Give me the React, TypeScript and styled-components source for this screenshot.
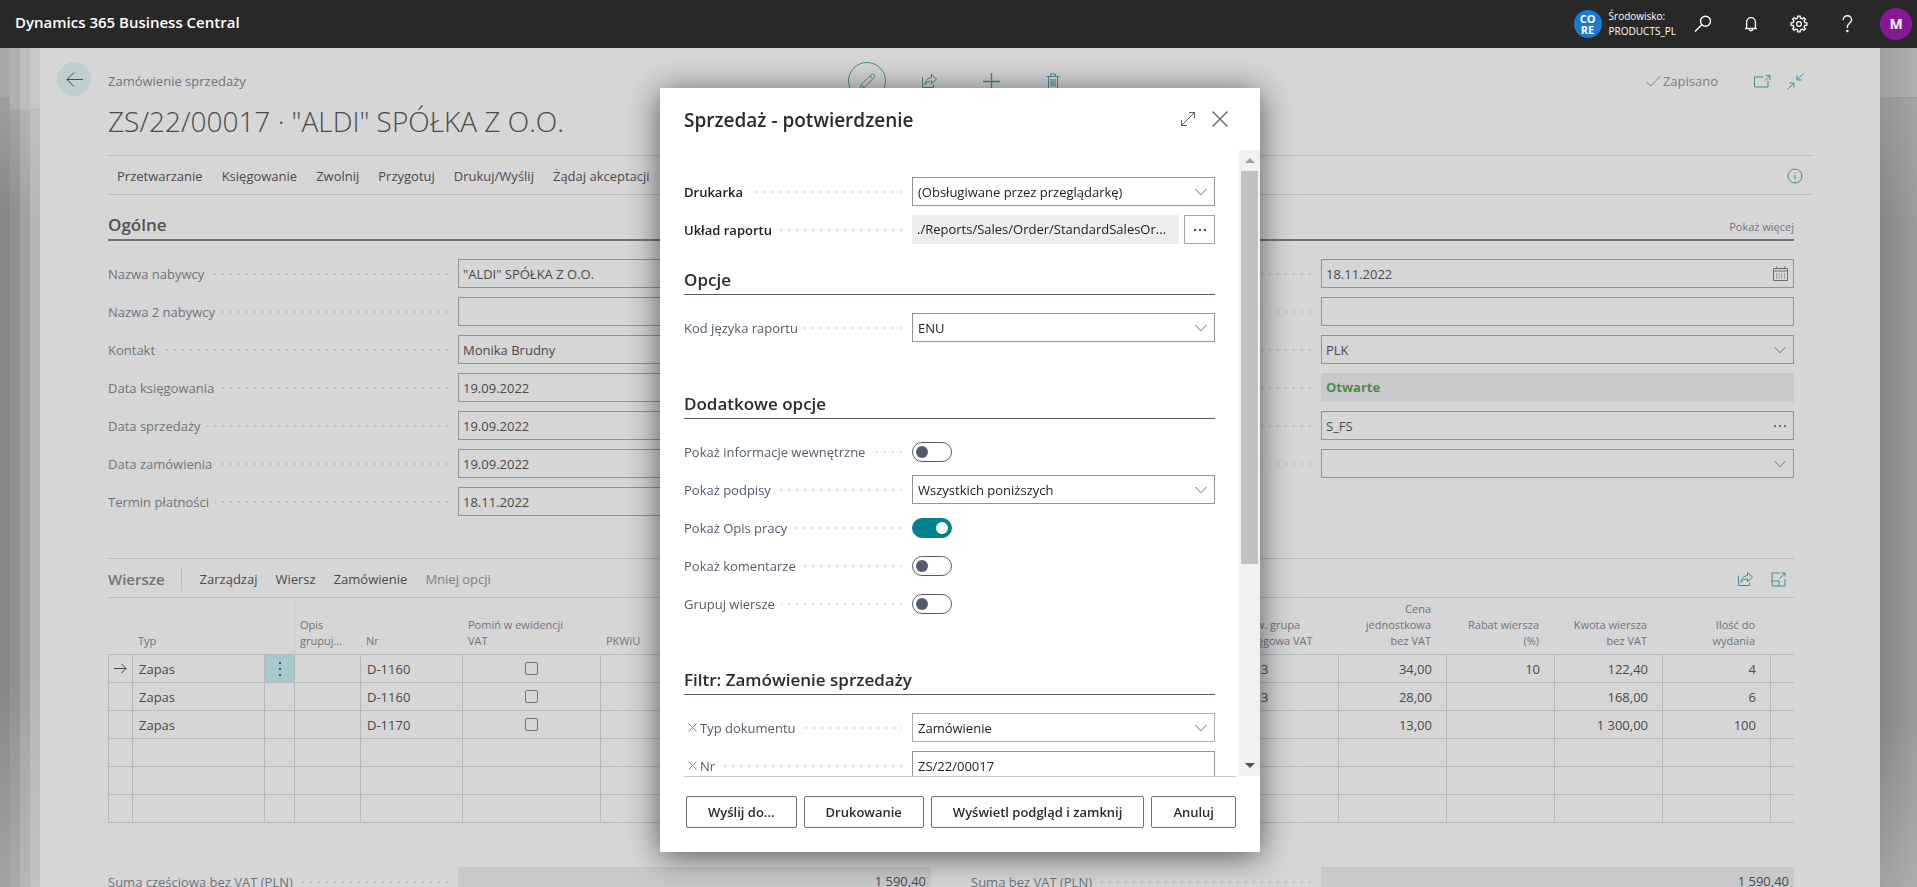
import React, { useId, useState } from 'react';
import styled, { createGlobalStyle, css } from 'styled-components';

const GlobalStyle = createGlobalStyle`
  *, *::before, *::after { box-sizing: border-box; }
  body {
    margin: 0;
    background: #d6d6d6;
    font-family: 'Open Sans', 'Noto Sans', sans-serif;
    font-size: 13px;
    line-height: 20px;
    color: #4a4a4a;
  }
  button, input, select { font: inherit; color: inherit; margin: 0; }
  button { background: none; border: 0; padding: 0; cursor: pointer; }
  h1, h2, h3, p { margin: 0; }
`;

/* ---------- shell ---------- */

const Shell = styled.div`
  display: flex;
  flex-direction: column;
  height: 100vh;
  overflow: hidden;
`;

const TopBar = styled.header`
  flex: none;
  display: flex;
  align-items: center;
  justify-content: space-between;
  height: 48px;
  padding: 0 5px 0 15px;
  background: #282828;
  color: #fff;
`;

const Product = styled.a`
  padding-bottom: 4px;
  font-size: 15px;
  font-weight: 600;
  color: #fff;
  text-decoration: none;
`;

const TopTools = styled.div`
  display: flex;
  align-items: center;
`;

const Environment = styled.div`
  display: flex;
  align-items: center;
  gap: 7px;
  margin-right: 3px;
  font-size: 10px;
  line-height: 15px;
`;

const EnvironmentBadge = styled.div`
  display: flex;
  flex-direction: column;
  align-items: center;
  justify-content: center;
  width: 28px;
  height: 28px;
  border-radius: 50%;
  background: #1a7ad0;
  font-size: 11px;
  font-weight: 700;
  line-height: 11px;
`;

const TopButton = styled.button`
  display: flex;
  align-items: center;
  justify-content: center;
  width: 48px;
  height: 48px;
`;

const Avatar = styled.button`
  width: 32px;
  height: 32px;
  margin-left: 9px;
  border-radius: 50%;
  background: #881798;
  color: #fff;
  font-size: 14px;
  font-weight: 700;
`;

const Stage = styled.div`
  flex: 1;
  display: flex;
  min-height: 0;
  overflow: hidden;
`;

const PageEdge = styled.div<{ $top: string; $body: string; $end: string; $head: number }>`
  flex: none;
  display: flex;
  flex-direction: column;
  width: 10px;
  background: linear-gradient(${p => p.$top}, ${p => p.$body} 20%, ${p => p.$body} 75%, ${p => p.$end});
  &::before {
    content: '';
    height: ${p => p.$head}px;
    background: ${p => p.$top};
    border-bottom: 1px solid rgba(0, 0, 0, 0.05);
  }
`;

const RightEdge = styled.div`
  flex: none;
  width: 37px;
  background:
    linear-gradient(rgba(176, 180, 178, 0.5), transparent 22%, transparent 80%, rgba(190, 190, 190, 0.5)),
    linear-gradient(90deg, #848484, #9b9b9b);
  &::before {
    content: '';
    display: block;
    height: 50px;
    background: linear-gradient(90deg, #9e9e9e, #b0b0b0);
    border-bottom: 1px solid #979797;
  }
`;

const Page = styled.main`
  flex: 1;
  min-width: 0;
  background: #d6d6d6;
`;

/* ---------- page header ---------- */

const Head = styled.div`
  display: grid;
  grid-template-columns: 1fr auto 1fr;
  padding-top: 14px;
`;

const HeadStart = styled.div`
  display: flex;
  align-items: flex-start;
  gap: 17px;
  padding-left: 17px;
`;

const BackButton = styled.button`
  display: flex;
  align-items: center;
  justify-content: center;
  width: 34px;
  height: 34px;
  border-radius: 50%;
  background: #bfcfcf;
`;

const Caption = styled.div`
  line-height: 38px;
  color: #6f747b;
`;

const HeadActions = styled.div`
  display: flex;
  gap: 24px;
  color: #3f8f92;
`;

const RoundButton = styled.button<{ $ring?: boolean }>`
  display: flex;
  align-items: center;
  justify-content: center;
  width: 38px;
  height: 38px;
  border: 1px solid ${p => (p.$ring ? '#3f8f92' : 'transparent')};
  border-radius: 50%;
`;

const HeadEnd = styled.div`
  display: flex;
  align-items: center;
  justify-content: flex-end;
  padding-right: 76px;
  color: #3f8f92;
`;

const Saved = styled.span`
  display: flex;
  align-items: center;
  gap: 2px;
  margin-right: 36px;
  color: #7b8086;
`;

const IconButton = styled.button<{ $gap?: number }>`
  display: flex;
  align-items: center;
  justify-content: center;
  margin-left: ${p => p.$gap ?? 0}px;
`;

const PageTitle = styled.h1`
  margin: 1px 68px 14px;
  font-size: 28px;
  font-weight: 300;
  line-height: 40px;
  color: #4a4a4a;
`;

const ActionBar = styled.nav`
  display: flex;
  align-items: center;
  gap: 19px;
  height: 40px;
  margin: 0 68px;
  padding: 2px 9px 0;
  border-top: 1px solid #b9bbbc;
  border-bottom: 1px solid #b9bbbc;
`;

const InfoButton = styled(IconButton)`
  margin-left: auto;
  color: #3f8f92;
`;

const Content = styled.div`
  padding: 0 86px 0 68px;
`;

const SectionHead = styled.div`
  display: flex;
  align-items: flex-end;
  justify-content: space-between;
  height: 46px;
  padding-bottom: 2px;
  border-bottom: 2px solid #6d7480;
`;

const SectionTitle = styled.h2`
  font-size: 17px;
  font-weight: 600;
  line-height: 24px;
  color: #4f5256;
`;

const MoreLink = styled.a`
  font-size: 11px;
  color: #6f747b;
  text-decoration: none;
`;

const TwoColumns = styled.div<{ $top: number }>`
  display: grid;
  grid-template-columns: 1fr 1fr;
  gap: 40px;
  margin-top: ${p => p.$top}px;
`;

const FieldStack = styled.div`
  display: flex;
  flex-direction: column;
  gap: 9px;
`;

/* ---------- fields ---------- */

const Row = styled.div<{ $label: number }>`
  display: grid;
  grid-template-columns: ${p => p.$label}px 1fr;
  height: 29px;
`;

const LabelCell = styled.div<{ $dot: string }>`
  display: flex;
  align-items: center;
  padding-right: 10px;
  &::after {
    content: '';
    flex: 1;
    height: 2px;
    margin-left: 6px;
    background: linear-gradient(90deg, transparent 6px, ${p => p.$dot} 6px) right top / 8px 2px repeat-x;
  }
`;

const Label = styled.label<{ $strong?: boolean; $dialog?: boolean }>`
  color: ${p => (p.$strong ? '#212121' : p.$dialog ? '#505c6d' : '#6f747b')};
  font-weight: ${p => (p.$strong ? 600 : 400)};
`;

const ClearButton = styled.button`
  display: flex;
  align-items: center;
  justify-content: center;
  width: 16px;
  height: 16px;
  color: #8a8f96;
`;

const Control = styled.div<{ $edge?: string }>`
  position: relative;
  display: flex;
  align-items: center;
  flex: 1;
  min-width: 0;
  border: 1px solid ${p => p.$edge ?? '#8f949b'};
`;

const fieldText = css`
  flex: 1;
  min-width: 0;
  width: 100%;
  height: 100%;
  border: 0;
  border-radius: 0;
  outline: 0;
  background: transparent;
  text-overflow: ellipsis;
`;

const TextInput = styled.input<{ $dialog?: boolean }>`
  ${fieldText}
  padding: 0 5px 0 ${p => (p.$dialog ? 5 : 4)}px;
  color: ${p => (p.$dialog ? '#212121' : '#4a4a4a')};
`;

const SelectInput = styled.select`
  ${fieldText}
  appearance: none;
  padding: 0 32px 0 5px;
  color: #212121;
`;

const Assist = styled.button`
  position: absolute;
  top: 0;
  bottom: 0;
  right: 0;
  display: flex;
  align-items: center;
  justify-content: center;
  width: 26px;
  color: #6b6f75;
`;

const SelectMark = styled.span`
  position: absolute;
  top: 0;
  bottom: 0;
  right: 0;
  display: flex;
  align-items: center;
  justify-content: center;
  width: 26px;
  color: #6b6f75;
  pointer-events: none;
`;

const ReadOnly = styled.output<{ $tone?: 'good' | 'number' | 'dialog' }>`
  flex: 1;
  min-width: 0;
  padding: 0 5px;
  overflow: hidden;
  line-height: 29px;
  white-space: nowrap;
  text-overflow: ellipsis;
  background: ${p => (p.$tone === 'dialog' ? '#ebedef' : '#c8c9cb')};
  color: ${p => (p.$tone === 'good' ? '#4f8a4f' : p.$tone === 'dialog' ? '#212121' : '#4a4a4a')};
  font-weight: ${p => (p.$tone === 'good' ? 700 : 400)};
  text-align: ${p => (p.$tone === 'number' ? 'right' : 'left')};
`;

/* ---------- lines ---------- */

const LinesBar = styled.div`
  display: flex;
  align-items: center;
  gap: 18px;
  height: 40px;
  margin-top: 42px;
  padding-top: 2px;
  border-top: 1px solid #b9bbbc;
  border-bottom: 1px solid #b9bbbc;
`;

const LinesTitle = styled.h2`
  padding-right: 16px;
  border-right: 1px solid #b9bbbc;
  font-size: 15px;
  font-weight: 600;
  line-height: 23px;
  color: #6f747b;
`;

const LinesTools = styled.div`
  display: flex;
  gap: 17px;
  margin-left: auto;
  padding-right: 8px;
  color: #3f8f92;
`;

const BarButton = styled.button<{ $soft?: boolean }>`
  color: ${p => (p.$soft ? '#7b8086' : '#4a4a4a')};
`;

const Lines = styled.table`
  width: 100%;
  table-layout: fixed;
  border-collapse: separate;
  border-spacing: 0;
`;

const Col = styled.col<{ $w?: number }>`
  width: ${p => (p.$w ? `${p.$w}px` : 'auto')};
`;

const Th = styled.th<{ $right?: boolean; $frozen?: boolean }>`
  height: 57px;
  padding: ${p => (p.$right ? '0 16px 5px 16px' : '0 4px 5px 5px')};
  border-bottom: 1px solid #b7babd;
  border-right: ${p => (p.$frozen ? '1px solid #cbcccd' : '0')};
  font-size: 11px;
  font-weight: 400;
  line-height: 16px;
  vertical-align: bottom;
  text-align: ${p => (p.$right ? 'right' : 'left')};
  color: #6f747b;
`;

const Td = styled.td<{ $align?: 'right' | 'center'; $first?: boolean; $last?: boolean; $active?: boolean }>`
  height: 28px;
  padding: ${p => (p.$align === 'center' ? '0' : p.$align === 'right' ? '0 14px 0 6px' : '0 6px')};
  border-bottom: 1px solid #b7babd;
  border-right: ${p => (p.$last ? '0' : '1px solid #b7babd')};
  border-left: ${p => (p.$first ? '1px solid #b7babd' : '0')};
  background: ${p => (p.$active ? '#a5c8ca' : 'transparent')};
  text-align: ${p => p.$align ?? 'left'};
  white-space: nowrap;
`;

const RowMenu = styled.button`
  display: flex;
  align-items: center;
  justify-content: center;
  width: 100%;
  height: 27px;
`;

const Tick = styled.input`
  appearance: none;
  display: block;
  width: 13px;
  height: 13px;
  margin: 0 auto;
  border: 1px solid #6f7277;
  border-radius: 2px;
`;

/* ---------- dialog ---------- */

const Overlay = styled.div`
  position: fixed;
  inset: 0;
  display: flex;
  justify-content: center;
  padding: 88px 0 35px 3px;
`;

const Dialog = styled.div`
  display: flex;
  flex-direction: column;
  width: 600px;
  background: #fff;
  box-shadow: 0 4px 32px rgba(0, 0, 0, 0.6);
  border-radius: 1px;
`;

const DialogHead = styled.div`
  flex: none;
  display: flex;
  align-items: center;
  gap: 16px;
  height: 62px;
  padding: 0 32px 0 24px;
  color: #5a5d61;
`;

const DialogTitle = styled.h2`
  flex: 1;
  padding-top: 2px;
  font-size: 19px;
  font-weight: 600;
  line-height: 28px;
  color: #2b2b2b;
`;

const DialogBody = styled.div`
  flex: 1;
  display: flex;
  min-height: 0;
  margin-left: 24px;
`;

const DialogScroll = styled.div`
  flex: 1;
  min-width: 0;
  padding: 27px 24px 0 0;
  overflow: hidden;
`;

const GroupTitle = styled.h3<{ $top: number }>`
  margin: ${p => p.$top}px 0 18px;
  padding-bottom: 2px;
  border-bottom: 1px solid #505c6d;
  font-size: 17px;
  font-weight: 600;
  line-height: 24px;
  color: #2b2b2b;
`;

const ScrollTrack = styled.div`
  flex: none;
  display: grid;
  grid-template-rows: 21px 393px 1fr 21px;
  justify-items: center;
  align-items: center;
  width: 21px;
  background: #f1f1f1;
`;

const ScrollThumb = styled.div`
  align-self: stretch;
  width: 17px;
  background: #c1c1c1;
`;

const Arrow = styled.span<{ $down?: boolean }>`
  border: 5px solid transparent;
  ${p =>
    p.$down
      ? css`
          grid-row: 4;
          margin-top: 5px;
          border-top-color: #505050;
        `
      : css`
          margin-bottom: 5px;
          border-bottom-color: #a3a3a3;
        `}
`;

const DialogFoot = styled.div`
  flex: none;
  display: flex;
  justify-content: flex-end;
  gap: 7px;
  height: 76px;
  margin: 0 24px;
  padding-top: 19px;
  border-top: 1px solid #c8c8c8;
`;

const FootButton = styled.button`
  height: 32px;
  padding: 0 21px;
  border: 1px solid #6e7073;
  border-radius: 2px;
  font-weight: 600;
  color: #2b2b2b;
`;

const LayoutLine = styled.div`
  display: flex;
  gap: 5px;
  min-width: 0;
`;

const DotsButton = styled.button`
  display: flex;
  align-items: center;
  justify-content: center;
  width: 31px;
  border: 1px solid #a0a3a7;
`;

const Switch = styled.input`
  appearance: none;
  align-self: center;
  display: flex;
  align-items: center;
  width: 40px;
  height: 20px;
  padding: 0 3px;
  border: 1px solid #505c6d;
  border-radius: 10px;
  background: #fff;
  &::before {
    content: '';
    width: 12px;
    height: 12px;
    border-radius: 50%;
    background: #505c6d;
  }
  &:checked {
    justify-content: flex-end;
    border-color: #00838f;
    background: #00838f;
  }
  &:checked::before { background: #fff; }
`;

/* ---------- icons ---------- */

type IconProps = { d: string; w?: number; h?: number; sw?: number; children?: React.ReactNode };

const Icon = ({ d, w = 16, h = 16, sw = 1, children }: IconProps) => (
  <svg width={w} height={h} viewBox={`0 0 ${w} ${h}`} fill="none" stroke="currentColor" strokeWidth={sw} aria-hidden="true">
    <path d={d} />
    {children}
  </svg>
);

const Chevron = () => <Icon w={12} h={8} d="M.5 1 6 6.8 11.5 1" />;

const Dots = ({ vertical }: { vertical?: boolean }) => (
  <svg width={vertical ? 2 : 12} height={vertical ? 14 : 2} fill="currentColor" aria-hidden="true">
    {[0, 5, 10].map(n => (
      <rect key={n} x={vertical ? 0 : n} y={vertical ? n + n / 5 : 0} width="2" height="2" />
    ))}
  </svg>
);

const Search = () => (
  <Icon w={18} h={18} sw={1.4} d="M1 16.5 7.6 9.9">
    <circle cx="11.5" cy="6.3" r="5" />
  </Icon>
);

const Bell = () => <Icon w={14} h={18} sw={1.3} d="M1 13.5h12M2.6 13.5V7a4.4 4.4 0 0 1 8.8 0v6.5M5.2 14a1.8 1.8 0 0 0 3.6 0" />;

const gearPath = (() => {
  const points: string[] = [];
  for (let tooth = 0; tooth < 8; tooth++) {
    [[-13, 6], [-9, 8], [9, 8], [13, 6]].forEach(([offset, radius]) => {
      const angle = ((tooth * 45 + offset) * Math.PI) / 180;
      points.push(`${(9 + radius * Math.cos(angle)).toFixed(2)} ${(9 + radius * Math.sin(angle)).toFixed(2)}`);
    });
  }
  return `M${points.join('L')}Z`;
})();

const Gear = () => (
  <Icon w={18} h={18} sw={1.3} d={gearPath}>
    <circle cx="9" cy="9" r="2.4" />
  </Icon>
);

const Help = () => (
  <Icon w={11} h={18} sw={1.4} d="M1.2 5A4.2 4.2 0 0 1 9.6 5c0 3-4.2 3.6-4.2 6.8v1.2">
    <circle cx="5.4" cy="16" r=".5" fill="currentColor" />
  </Icon>
);

const Share = () => (
  <Icon w={17} h={16} d="M1.5 4.5v10h11v-3">
    <path d="M10.5 1.5 15.5 6l-5 4.5V8c-3 0-5 1-6.5 3.5.3-4 2.500-6.500 6.500-7z" />
  </Icon>
);

const Pencil = () => <Icon w={17} h={17} d="M1 16l1.3-4.5L12.3 1.5a1.9 1.9 0 0 1 2.8 0 1.9 1.9 0 0 1 0 2.8L5.3 14.5zM2.3 11.5l3 3M11 3l2.8 2.8" />;
const Plus = () => <Icon w={17} h={17} sw={1.4} d="M8.5 0v17M0 8.5h17" />;
const Trash = () => <Icon w={14} h={17} d="M.5 3.5h13M2.5 3.5v12.5h9V3.5M4.5 3.2V1h5v2.2M5 6v7.5M7 6v7.5M9 6v7.5" />;
const Expand = () => <Icon d="M1.5 14.5 14.5 1.5M9 1.5h5.5V7M1.5 9v5.5H7" />;
const Collapse = () => <Icon w={17} h={17} d="M16.5.5 10 7M10 2.5V7h4.5M.5 16.5 7 10M2.5 10H7v4.5" />;
const PopOut = () => <Icon w={17} h={14} d="M9.5 3H.5v10h13.5V7M11.5 1.5H16V6M16 1.5 11 6.5" />;
const FullView = () => <Icon w={15} h={15} d="M8.5 1H1v13h13V7M8 9H1M8 9v5M10.5 1H14v3.5M14 1 8.5 6.5" />;
const Check = () => <Icon w={15} h={12} d="M.5 7 5 11 14.5.8" />;
const ArrowLeft = () => <Icon w={17} h={15} d="M1 7.5h16M8 .5 1 7.5l7 7" />;
const ArrowRight = () => <Icon w={13} h={11} d="M0 5.5h12M7.5 1 12 5.5 7.5 10" />;
const Calendar = () => (
  <Icon w={15} h={15} d="M.5 2.5h14v12H.5zM.5 5h14M3.5.5v2M11.5.5v2">
    <path strokeDasharray="1 1" d="M3.5 7.5v5M6 7.5v5M8.5 7.5v5M11.5 7.5v5" />
  </Icon>
);
const Info = () => (
  <Icon d="M8 7v4.5M8 4.5v1.2">
    <circle cx="8" cy="8" r="7" />
  </Icon>
);
const Cross = ({ size }: { size: number }) => (
  <Icon w={size} h={size} sw={size > 10 ? 1.3 : 1} d={`M.5.5l${size - 1} ${size - 1}M${size - 0.5}.5l-${size - 1} ${size - 1}`} />
);

/* ---------- parts ---------- */

const PAGE_DOT = '#bcbdbe';
const DIALOG_DOT = '#d9dbde';

type PageFieldProps = { label?: string; name?: string; value?: string; assist?: React.ReactNode; assistName?: string };

const PageField = ({ label, name, value = '', assist, assistName }: PageFieldProps) => {
  const id = useId();
  return (
    <Row $label={350}>
      <LabelCell $dot={PAGE_DOT}>{label && <Label htmlFor={id}>{label}</Label>}</LabelCell>
      <Control>
        <TextInput id={id} aria-label={name} defaultValue={value} />
        {assist && <Assist aria-label={assistName}>{assist}</Assist>}
      </Control>
    </Row>
  );
};

const Total = ({ label, value }: { label: string; value: string }) => {
  const id = useId();
  return (
    <Row $label={350}>
      <LabelCell $dot={PAGE_DOT}>
        <Label htmlFor={id}>{label}</Label>
      </LabelCell>
      <ReadOnly id={id} $tone="number">{value}</ReadOnly>
    </Row>
  );
};

type DialogFieldProps = { label: string; strong?: boolean; clearable?: boolean; children: (id: string) => React.ReactNode };

const DialogField = ({ label, strong, clearable, children }: DialogFieldProps) => {
  const id = useId();
  return (
    <Row $label={228}>
      <LabelCell $dot={DIALOG_DOT}>
        {clearable && (
          <ClearButton aria-label={`Usuń filtr ${label}`}>
            <Cross size={9} />
          </ClearButton>
        )}
        <Label htmlFor={id} $strong={strong} $dialog>{label}</Label>
      </LabelCell>
      {children(id)}
    </Row>
  );
};

const Dropdown = ({ id, value, edge }: { id: string; value: string; edge?: string }) => (
  <Control $edge={edge}>
    <SelectInput id={id} defaultValue={value}>
      <option>{value}</option>
    </SelectInput>
    <SelectMark>
      <Chevron />
    </SelectMark>
  </Control>
);

const SwitchField = ({ label, on = false }: { label: string; on?: boolean }) => {
  const [checked, setChecked] = useState(on);
  return (
    <DialogField label={label}>
      {id => <Switch type="checkbox" role="switch" id={id} checked={checked} onChange={() => setChecked(!checked)} />}
    </DialogField>
  );
};

/* ---------- data ---------- */

const customerFields = [
  ['Nazwa nabywcy', '"ALDI" SPÓŁKA Z O.O.'],
  ['Nazwa 2 nabywcy', ''],
  ['Kontakt', 'Monika Brudny'],
  ['Data księgowania', '19.09.2022'],
  ['Data sprzedaży', '19.09.2022'],
  ['Data zamówienia', '19.09.2022'],
  ['Termin płatności', '18.11.2022'],
];

const orderLines = [
  { type: 'Zapas', no: 'D-1160', vat: 'U23', price: '34,00', discount: '10', amount: '122,40', ship: '4' },
  { type: 'Zapas', no: 'D-1160', vat: 'U23', price: '28,00', discount: '', amount: '168,00', ship: '6' },
  { type: 'Zapas', no: 'D-1170', vat: '', price: '13,00', discount: '', amount: '1 300,00', ship: '100' },
  null,
  null,
  null,
];

const columnWidths = [25, 132, 30, 66, 102, 138, undefined, 101, 108, 108, 108, 108, 23];

export default function App() {
  return (
    <Shell>
      <GlobalStyle />
      <TopBar>
        <Product href="#">Dynamics 365 Business Central</Product>
        <TopTools>
          <Environment>
            <EnvironmentBadge>
              <span>CO</span>
              <span>RE</span>
            </EnvironmentBadge>
            <div>Środowisko:<br />PRODUCTS_PL</div>
          </Environment>
          <TopButton aria-label="Wyszukaj"><Search /></TopButton>
          <TopButton aria-label="Powiadomienia"><Bell /></TopButton>
          <TopButton aria-label="Ustawienia"><Gear /></TopButton>
          <TopButton aria-label="Pomoc"><Help /></TopButton>
          <Avatar>M</Avatar>
        </TopTools>
      </TopBar>

      <Stage>
        <PageEdge $head={50} $top="#a9a9a9" $body="#868686" $end="#a2a2a2" />
        <PageEdge $head={62} $top="#b0b0b0" $body="#8f9190" $end="#aaaaaa" />
        <PageEdge $head={62} $top="#bdbdbd" $body="#a2a2a2" $end="#b6b6b6" />
        <PageEdge $head={62} $top="#c6c6c6" $body="#b5b5b5" $end="#c2c2c2" />

        <Page>
          <Head>
            <HeadStart>
              <BackButton aria-label="Wstecz"><ArrowLeft /></BackButton>
              <Caption>Zamówienie sprzedaży</Caption>
            </HeadStart>
            <HeadActions>
              <RoundButton $ring aria-label="Edytuj"><Pencil /></RoundButton>
              <RoundButton aria-label="Udostępnij"><Share /></RoundButton>
              <RoundButton aria-label="Nowy"><Plus /></RoundButton>
              <RoundButton aria-label="Usuń"><Trash /></RoundButton>
            </HeadActions>
            <HeadEnd>
              <Saved><Check />Zapisano</Saved>
              <IconButton aria-label="Otwórz w nowym oknie"><PopOut /></IconButton>
              <IconButton $gap={16} aria-label="Zwiń"><Collapse /></IconButton>
            </HeadEnd>
          </Head>
          <PageTitle>ZS/22/00017 · "ALDI" SPÓŁKA Z O.O.</PageTitle>

          <ActionBar>
            {['Przetwarzanie', 'Księgowanie', 'Zwolnij', 'Przygotuj', 'Drukuj/Wyślij', 'Żądaj akceptacji'].map(item => (
              <BarButton key={item}>{item}</BarButton>
            ))}
            <InfoButton aria-label="Informacje"><Info /></InfoButton>
          </ActionBar>

          <Content>
            <SectionHead>
              <SectionTitle>Ogólne</SectionTitle>
              <MoreLink href="#">Pokaż więcej</MoreLink>
            </SectionHead>
            <TwoColumns $top={18}>
              <FieldStack>
                {customerFields.map(([label, value]) => (
                  <PageField key={label} label={label} value={value} />
                ))}
              </FieldStack>
              <FieldStack>
                <PageField name="Data" value="18.11.2022" assist={<Calendar />} assistName="Kalendarz" />
                <PageField name="Numer zewnętrzny" />
                <PageField name="Waluta" value="PLK" assist={<Chevron />} assistName="Lista walut" />
                <Row $label={350}>
                  <LabelCell $dot={PAGE_DOT} />
                  <ReadOnly $tone="good" aria-label="Status">Otwarte</ReadOnly>
                </Row>
                <PageField name="Seria" value="S_FS" assist={<Dots />} assistName="Wybierz serię" />
                <PageField name="Kod" assist={<Chevron />} assistName="Lista kodów" />
              </FieldStack>
            </TwoColumns>

            <LinesBar>
              <LinesTitle>Wiersze</LinesTitle>
              <BarButton>Zarządzaj</BarButton>
              <BarButton>Wiersz</BarButton>
              <BarButton>Zamówienie</BarButton>
              <BarButton $soft>Mniej opcji</BarButton>
              <LinesTools>
                <IconButton aria-label="Udostępnij wiersze"><Share /></IconButton>
                <IconButton aria-label="Pełny widok"><FullView /></IconButton>
              </LinesTools>
            </LinesBar>

            <Lines>
              <colgroup>
                {columnWidths.map((width, i) => <Col key={i} $w={width} />)}
              </colgroup>
              <thead>
                <tr>
                  <Th />
                  <Th>Typ</Th>
                  <Th $frozen />
                  <Th>Opis grupuj...</Th>
                  <Th>Nr</Th>
                  <Th>Pomiń w ewidencji<br />VAT</Th>
                  <Th>PKWiU</Th>
                  <Th>Tow. grupa<br />księgowa VAT</Th>
                  <Th $right>Cena jednostkowa bez VAT</Th>
                  <Th $right>Rabat wiersza (%)</Th>
                  <Th $right>Kwota wiersza bez VAT</Th>
                  <Th $right>Ilość do wydania</Th>
                  <Th />
                </tr>
              </thead>
              <tbody>
                {orderLines.map((line, i) => (
                  <tr key={i}>
                    <Td $first $align="center">{i === 0 && <ArrowRight />}</Td>
                    <Td>{line?.type}</Td>
                    <Td $align="center" $active={i === 0}>
                      {i === 0 && <RowMenu aria-label="Więcej opcji"><Dots vertical /></RowMenu>}
                    </Td>
                    <Td />
                    <Td>{line?.no}</Td>
                    <Td $align="center">
                      {line && <Tick type="checkbox" aria-label={`Pomiń w ewidencji VAT, wiersz ${i + 1}`} />}
                    </Td>
                    <Td />
                    <Td>{line?.vat}</Td>
                    <Td $align="right">{line?.price}</Td>
                    <Td $align="right">{line?.discount}</Td>
                    <Td $align="right">{line?.amount}</Td>
                    <Td $align="right">{line?.ship}</Td>
                    <Td $last />
                  </tr>
                ))}
              </tbody>
            </Lines>

            <TwoColumns $top={44}>
              <Total label="Suma częściowa bez VAT (PLN)" value="1 590,40" />
              <Total label="Suma bez VAT (PLN)" value="1 590,40" />
            </TwoColumns>
          </Content>
        </Page>
        <RightEdge />
      </Stage>

      <Overlay>
        <Dialog role="dialog" aria-modal="true" aria-labelledby="dialog-title">
          <DialogHead>
            <DialogTitle id="dialog-title">Sprzedaż - potwierdzenie</DialogTitle>
            <IconButton aria-label="Powiększ"><Expand /></IconButton>
            <IconButton aria-label="Zamknij"><Cross size={16} /></IconButton>
          </DialogHead>
          <DialogBody>
            <DialogScroll>
              <FieldStack>
                <DialogField label="Drukarka" strong>
                  {id => <Dropdown id={id} value="(Obsługiwane przez przeglądarkę)" />}
                </DialogField>
                <DialogField label="Układ raportu" strong>
                  {id => (
                    <LayoutLine>
                      <ReadOnly id={id} $tone="dialog">./Reports/Sales/Order/StandardSalesOr...</ReadOnly>
                      <DotsButton aria-label="Wybierz układ"><Dots /></DotsButton>
                    </LayoutLine>
                  )}
                </DialogField>
              </FieldStack>

              <GroupTitle $top={24}>Opcje</GroupTitle>
              <DialogField label="Kod języka raportu">
                {id => (
                  <Control>
                    <TextInput $dialog id={id} defaultValue="ENU" />
                    <Assist aria-label="Lista języków"><Chevron /></Assist>
                  </Control>
                )}
              </DialogField>

              <GroupTitle $top={50}>Dodatkowe opcje</GroupTitle>
              <FieldStack>
                <SwitchField label="Pokaż informacje wewnętrzne" />
                <DialogField label="Pokaż podpisy">
                  {id => <Dropdown id={id} value="Wszystkich poniższych" />}
                </DialogField>
                <SwitchField label="Pokaż Opis pracy" on />
                <SwitchField label="Pokaż komentarze" />
                <SwitchField label="Grupuj wiersze" />
              </FieldStack>

              <GroupTitle $top={50}>Filtr: Zamówienie sprzedaży</GroupTitle>
              <FieldStack>
                <DialogField label="Typ dokumentu" clearable>
                  {id => <Dropdown id={id} value="Zamówienie" edge="#abadb0" />}
                </DialogField>
                <DialogField label="Nr" clearable>
                  {id => (
                    <Control>
                      <TextInput $dialog id={id} defaultValue="ZS/22/00017" />
                    </Control>
                  )}
                </DialogField>
              </FieldStack>
            </DialogScroll>
            <ScrollTrack aria-hidden="true">
              <Arrow />
              <ScrollThumb />
              <Arrow $down />
            </ScrollTrack>
          </DialogBody>
          <DialogFoot>
            <FootButton>Wyślij do...</FootButton>
            <FootButton>Drukowanie</FootButton>
            <FootButton>Wyświetl podgląd i zamknij</FootButton>
            <FootButton>Anuluj</FootButton>
          </DialogFoot>
        </Dialog>
      </Overlay>
    </Shell>
  );
}
